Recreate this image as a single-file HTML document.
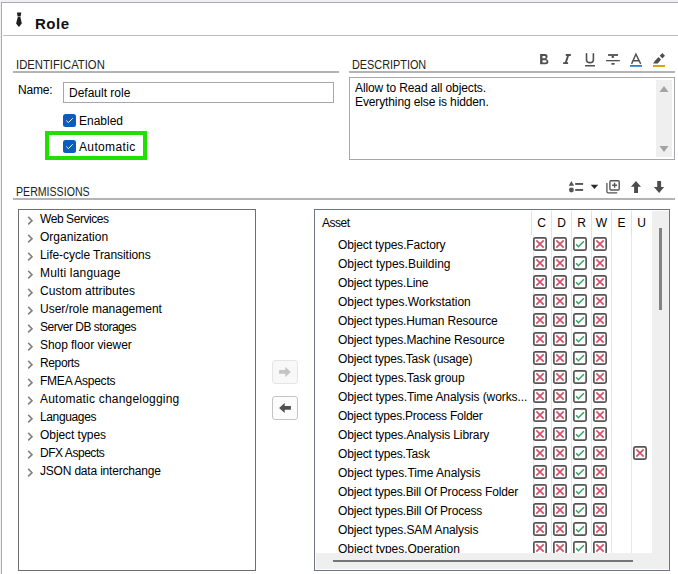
<!DOCTYPE html><html><head><meta charset="utf-8"><style>
*{box-sizing:border-box;margin:0;padding:0}
html,body{width:678px;height:574px;overflow:hidden;background:#f0f0f0;font-family:"Liberation Sans",sans-serif;font-size:12px;color:#000}
.a{position:absolute;white-space:nowrap}
#panel{position:absolute;left:1px;top:2px;width:700px;height:600px;background:#fff;border:1px solid #a9abb2}
.hline{position:absolute;height:2px;background:#b4b4b4}
.cap{position:absolute;white-space:nowrap;letter-spacing:-0.55px;line-height:14px;color:#222}
.t{position:absolute;white-space:nowrap;line-height:14px}
.chk{position:absolute;width:13px;height:13px;border-radius:2.5px;background:#0b5cc0}
.tree{position:absolute;left:18px;top:209px;width:238px;height:362px;border:1px solid #6e6e6e;background:#fff}
.trow{position:absolute;left:0;height:18px;line-height:18px;white-space:nowrap;letter-spacing:-0.05px}
.chev{position:absolute;left:7.5px;top:6px}
.grid{position:absolute;left:314px;top:209px;width:356px;height:362px;border:1px solid #6f7480;background:#fff;overflow:hidden}
.grow{position:absolute;left:0;height:19px;line-height:19px;white-space:nowrap}
.grow .tx{position:absolute;left:23px;top:0;letter-spacing:-0.12px}
.cb{position:absolute;top:1px}
.vsep{position:absolute;width:1px}
.btn{position:absolute;width:26px;height:24px;border-radius:3px}
</style></head><body>
<div id="panel"></div>
<svg class="a" style="left:10px;top:8px" width="20" height="22" viewBox="10 8 20 22"><path d="M16.9 12.6H21.3L20.6 16.5H17.6Z" fill="#1f1f1f"/><path d="M17.8 16.9H20.4L21.8 23.6L18.95 26.9L16.1 23.6Z" fill="#1f1f1f"/></svg>
<div class="a" style="left:35px;top:15px;font-weight:bold;font-size:15px;line-height:18px;letter-spacing:0.5px;color:#111">Role</div>
<div class="a" style="left:3px;top:35px;width:680px;height:1px;background:#bdbdbd"></div>
<div class="cap" style="left:15.5px;top:58px;letter-spacing:0;transform:scaleX(0.94);transform-origin:0 0">IDENTIFICATION</div>
<div class="hline" style="left:13px;top:71px;width:326px"></div>
<div class="t" style="left:18px;top:83px;letter-spacing:-0.2px">Name:</div>
<div class="a" style="left:63px;top:82px;width:271px;height:21px;border:1px solid #a6a6ae;background:#fff"></div>
<div class="t" style="left:69px;top:86px">Default role</div>
<div class="chk" style="left:63px;top:114px"><svg width="13" height="13" viewBox="0 0 13 13" style="position:absolute;left:0;top:0"><path d="M3.3 6.6L5.4 8.6L9.7 4.3" fill="none" stroke="#fff" stroke-width="1"/></svg></div>
<div class="t" style="left:79px;top:114px">Enabled</div>
<div class="a" style="left:45px;top:131px;width:102px;height:29px;border:4px solid #20e000"></div>
<div class="chk" style="left:63px;top:140px"><svg width="13" height="13" viewBox="0 0 13 13" style="position:absolute;left:0;top:0"><path d="M3.3 6.6L5.4 8.6L9.7 4.3" fill="none" stroke="#fff" stroke-width="1"/></svg></div>
<div class="t" style="left:79px;top:140px;letter-spacing:0.35px">Automatic</div>
<div class="cap" style="left:351.6px;top:58px;letter-spacing:0;transform:scaleX(0.905);transform-origin:0 0">DESCRIPTION</div>
<div class="hline" style="left:349px;top:71px;width:326px"></div>
<svg class="a" style="left:530px;top:48px" width="140" height="22" viewBox="530 48 140 22">
<path fill-rule="evenodd" fill="#505050" d="M540.1 54H545Q547.6 54 547.6 56.6Q547.6 58.4 546.2 59.1Q548.4 59.8 548.4 61.6Q548.4 64.2 545.6 64.2H540.1ZM542.5 55.9H544.8Q545.7 55.9 545.7 57.1Q545.7 58.2 544.8 58.2H542.5ZM542.5 60.3H545.2Q546.6 60.3 546.6 61.5Q546.6 62.4 545.2 62.4H542.5Z"/>
<path d="M565.8 55H570.8M563.1 63.1H568.1M568.3 55L565.6 63.1" stroke="#505050" stroke-width="1.9" fill="none"/>
<path d="M586.5 53.8V59.5Q586.5 62.6 589.95 62.6Q593.4 62.6 593.4 59.5V53.8" stroke="#505050" stroke-width="1.6" fill="none" stroke-linecap="round"/>
<rect x="585" y="65" width="10" height="1.5" fill="#505050"/>
<rect x="608.1" y="54.1" width="9.9" height="1.8" fill="#505050"/><path d="M611.5 55.9H614L613.6 58H611.9Z" fill="#505050"/><rect x="606.1" y="60" width="13.7" height="1.3" fill="#505050"/><rect x="611.4" y="63" width="3.2" height="1.7" fill="#505050"/>
<path d="M631.6 63.9L635.9 54.2L640.7 63.9M633.3 60.7H639" stroke="#505050" stroke-width="1.4" fill="none"/><rect x="630" y="65" width="12" height="1.8" fill="#2f7fc5"/>
<path d="M662.3 53L665 55.7L662.4 58.4L659.7 55.7Z" fill="#505050"/><path d="M658.5 57.1L661 59.5L657.9 63.5L653 63.6L655.2 60.4Z" fill="#505050"/><rect x="653" y="65" width="12" height="2" fill="#dba214"/>
</svg>
<div class="a" style="left:349px;top:77px;width:326px;height:83px;border:1px solid #a6a6ae;background:#fff"></div>
<div class="a" style="left:656px;top:80px;width:16px;height:77px;background:#efefef"></div>
<svg class="a" style="left:659px;top:85px" width="10" height="8" viewBox="0 0 10 8"><path d="M0.5 7L5 1L9.5 7Z" fill="#a3a3a3"/></svg>
<svg class="a" style="left:659px;top:145px" width="10" height="8" viewBox="0 0 10 8"><path d="M0.5 1L5 7L9.5 1Z" fill="#a3a3a3"/></svg>
<div class="a" style="left:355px;top:80.6px;line-height:14.8px;letter-spacing:-0.12px">Allow to Read all objects.<br>Everything else is hidden.</div>
<div class="cap" style="left:15.5px;top:185px;letter-spacing:0;transform:scaleX(0.883);transform-origin:0 0">PERMISSIONS</div>
<div class="hline" style="left:13px;top:198px;width:662px"></div>
<svg class="a" style="left:560px;top:176px" width="118" height="22" viewBox="560 176 118 22">
<path d="M571.4 181.1L574.1 185.7H568.7Z" fill="#555"/><circle cx="571.4" cy="190" r="2.45" fill="#555"/>
<rect x="575.2" y="183" width="7.9" height="1.9" fill="#555"/><rect x="575.2" y="189" width="7.9" height="1.9" fill="#555"/>
<path d="M590.7 184.8H598.2L594.45 188.9Z" fill="#2a2a2a"/>
<path d="M606.9 183V191.6Q606.9 192.9 608.2 192.9H617.2" stroke="#555" stroke-width="1.3" fill="none"/>
<rect x="609.9" y="180.7" width="9.3" height="9.3" rx="1" stroke="#555" stroke-width="1.4" fill="#fff"/>
<path d="M614.6 182.8V187.8M612.1 185.3H617.1" stroke="#555" stroke-width="1.4"/>
<path d="M635.95 181.1L641 186.7H638V192.9H634.1V186.7H630.9Z" fill="#4d4d4d"/>
<path d="M657.2 181.1H661.1V187H664.1L659.15 192.9L653.9 187H657.2Z" fill="#4d4d4d"/>
</svg>
<div class="tree">
<div class="trow" style="top:0px;letter-spacing:-0.432px"><svg class="chev" width="7" height="10" viewBox="0 0 7 10"><path d="M1.2 0.9L5 4.65L1.2 8.4" stroke="#808080" stroke-width="1.55" fill="none"/></svg><span style="position:absolute;left:21px">Web Services</span></div>
<div class="trow" style="top:18px;letter-spacing:0.005px"><svg class="chev" width="7" height="10" viewBox="0 0 7 10"><path d="M1.2 0.9L5 4.65L1.2 8.4" stroke="#808080" stroke-width="1.55" fill="none"/></svg><span style="position:absolute;left:21px">Organization</span></div>
<div class="trow" style="top:36px;letter-spacing:-0.064px"><svg class="chev" width="7" height="10" viewBox="0 0 7 10"><path d="M1.2 0.9L5 4.65L1.2 8.4" stroke="#808080" stroke-width="1.55" fill="none"/></svg><span style="position:absolute;left:21px">Life-cycle Transitions</span></div>
<div class="trow" style="top:54px;letter-spacing:0.188px"><svg class="chev" width="7" height="10" viewBox="0 0 7 10"><path d="M1.2 0.9L5 4.65L1.2 8.4" stroke="#808080" stroke-width="1.55" fill="none"/></svg><span style="position:absolute;left:21px">Multi language</span></div>
<div class="trow" style="top:72px;letter-spacing:0.056px"><svg class="chev" width="7" height="10" viewBox="0 0 7 10"><path d="M1.2 0.9L5 4.65L1.2 8.4" stroke="#808080" stroke-width="1.55" fill="none"/></svg><span style="position:absolute;left:21px">Custom attributes</span></div>
<div class="trow" style="top:90px;letter-spacing:-0.008px"><svg class="chev" width="7" height="10" viewBox="0 0 7 10"><path d="M1.2 0.9L5 4.65L1.2 8.4" stroke="#808080" stroke-width="1.55" fill="none"/></svg><span style="position:absolute;left:21px">User/role management</span></div>
<div class="trow" style="top:108px;letter-spacing:-0.485px"><svg class="chev" width="7" height="10" viewBox="0 0 7 10"><path d="M1.2 0.9L5 4.65L1.2 8.4" stroke="#808080" stroke-width="1.55" fill="none"/></svg><span style="position:absolute;left:21px">Server DB storages</span></div>
<div class="trow" style="top:126px;letter-spacing:-0.056px"><svg class="chev" width="7" height="10" viewBox="0 0 7 10"><path d="M1.2 0.9L5 4.65L1.2 8.4" stroke="#808080" stroke-width="1.55" fill="none"/></svg><span style="position:absolute;left:21px">Shop floor viewer</span></div>
<div class="trow" style="top:144px;letter-spacing:-0.367px"><svg class="chev" width="7" height="10" viewBox="0 0 7 10"><path d="M1.2 0.9L5 4.65L1.2 8.4" stroke="#808080" stroke-width="1.55" fill="none"/></svg><span style="position:absolute;left:21px">Reports</span></div>
<div class="trow" style="top:162px;letter-spacing:-0.232px"><svg class="chev" width="7" height="10" viewBox="0 0 7 10"><path d="M1.2 0.9L5 4.65L1.2 8.4" stroke="#808080" stroke-width="1.55" fill="none"/></svg><span style="position:absolute;left:21px">FMEA Aspects</span></div>
<div class="trow" style="top:180px;letter-spacing:0.205px"><svg class="chev" width="7" height="10" viewBox="0 0 7 10"><path d="M1.2 0.9L5 4.65L1.2 8.4" stroke="#808080" stroke-width="1.55" fill="none"/></svg><span style="position:absolute;left:21px">Automatic changelogging</span></div>
<div class="trow" style="top:198px;letter-spacing:-0.362px"><svg class="chev" width="7" height="10" viewBox="0 0 7 10"><path d="M1.2 0.9L5 4.65L1.2 8.4" stroke="#808080" stroke-width="1.55" fill="none"/></svg><span style="position:absolute;left:21px">Languages</span></div>
<div class="trow" style="top:216px;letter-spacing:-0.059px"><svg class="chev" width="7" height="10" viewBox="0 0 7 10"><path d="M1.2 0.9L5 4.65L1.2 8.4" stroke="#808080" stroke-width="1.55" fill="none"/></svg><span style="position:absolute;left:21px">Object types</span></div>
<div class="trow" style="top:234px;letter-spacing:-0.460px"><svg class="chev" width="7" height="10" viewBox="0 0 7 10"><path d="M1.2 0.9L5 4.65L1.2 8.4" stroke="#808080" stroke-width="1.55" fill="none"/></svg><span style="position:absolute;left:21px">DFX Aspects</span></div>
<div class="trow" style="top:252px;letter-spacing:-0.190px"><svg class="chev" width="7" height="10" viewBox="0 0 7 10"><path d="M1.2 0.9L5 4.65L1.2 8.4" stroke="#808080" stroke-width="1.55" fill="none"/></svg><span style="position:absolute;left:21px">JSON data interchange</span></div>
</div>
<div class="btn" style="left:272px;top:360px;border:1px solid #e6e6e6;background:#f8f8f8"><svg style="position:absolute;left:5px;top:5px" width="14" height="12" viewBox="0 0 14 12"><path d="M1.1 3.9H7.3V0.9L12.9 5.9L7.3 10.9V7.8H1.1Z" fill="#c4c4c4"/></svg></div>
<div class="btn" style="left:272px;top:396px;border:1px solid #c4c4c4;background:#fcfcfc"><svg style="position:absolute;left:5px;top:5px" width="14" height="12" viewBox="0 0 14 12"><path d="M12.9 3.9H6.7V0.9L1.1 5.9L6.7 10.9V7.8H12.9Z" fill="#505050"/></svg></div>
<div class="grid">
<div class="a" style="left:7px;top:4px;line-height:19px;letter-spacing:-0.5px">Asset</div>
<div class="vsep" style="left:216px;top:1px;height:24px;background:#e2e2e2"></div>
<div class="vsep" style="left:218px;top:25px;height:318px;background:#dde9fb"></div>
<div class="a" style="left:217px;width:19px;text-align:center;top:4px;line-height:19px">C</div>
<div class="vsep" style="left:236px;top:1px;height:24px;background:#e2e2e2"></div>
<div class="vsep" style="left:236px;top:25px;height:318px;background:#dde9fb"></div>
<div class="a" style="left:237px;width:19px;text-align:center;top:4px;line-height:19px">D</div>
<div class="vsep" style="left:256px;top:1px;height:24px;background:#e2e2e2"></div>
<div class="vsep" style="left:256px;top:25px;height:318px;background:#dde9fb"></div>
<div class="a" style="left:257px;width:19px;text-align:center;top:4px;line-height:19px">R</div>
<div class="vsep" style="left:276px;top:1px;height:24px;background:#e2e2e2"></div>
<div class="vsep" style="left:276px;top:25px;height:318px;background:#dde9fb"></div>
<div class="a" style="left:277px;width:19px;text-align:center;top:4px;line-height:19px">W</div>
<div class="vsep" style="left:296px;top:1px;height:24px;background:#e2e2e2"></div>
<div class="vsep" style="left:296px;top:25px;height:318px;background:#dde9fb"></div>
<div class="a" style="left:297px;width:19px;text-align:center;top:4px;line-height:19px">E</div>
<div class="vsep" style="left:316px;top:1px;height:24px;background:#e2e2e2"></div>
<div class="vsep" style="left:316px;top:25px;height:318px;background:#dde9fb"></div>
<div class="a" style="left:317px;width:19px;text-align:center;top:4px;line-height:19px">U</div>
<div class="grow" style="top:26px;width:336px"><span class="tx" style="letter-spacing:-0.131px">Object types.Factory</span><svg class="cb" style="left:218px" width="14" height="14" viewBox="0 0 14 14"><rect x="0.85" y="0.85" width="12.3" height="12.3" rx="1.6" fill="#fff" stroke="#555" stroke-width="1.7"/><path d="M3.3 3.3L10.7 10.7M10.7 3.3L3.3 10.7" stroke="#d64f6a" stroke-width="1.7"/></svg><svg class="cb" style="left:238px" width="14" height="14" viewBox="0 0 14 14"><rect x="0.85" y="0.85" width="12.3" height="12.3" rx="1.6" fill="#fff" stroke="#555" stroke-width="1.7"/><path d="M3.3 3.3L10.7 10.7M10.7 3.3L3.3 10.7" stroke="#d64f6a" stroke-width="1.7"/></svg><svg class="cb" style="left:258px" width="14" height="14" viewBox="0 0 14 14"><rect x="0.85" y="0.85" width="12.3" height="12.3" rx="1.6" fill="#fff" stroke="#555" stroke-width="1.7"/><path d="M3.1 7.2L5.4 9.7L10.9 4.2" fill="none" stroke="#2ca55c" stroke-width="1.45"/></svg><svg class="cb" style="left:278px" width="14" height="14" viewBox="0 0 14 14"><rect x="0.85" y="0.85" width="12.3" height="12.3" rx="1.6" fill="#fff" stroke="#555" stroke-width="1.7"/><path d="M3.3 3.3L10.7 10.7M10.7 3.3L3.3 10.7" stroke="#d64f6a" stroke-width="1.7"/></svg></div>
<div class="grow" style="top:45px;width:336px"><span class="tx" style="letter-spacing:-0.010px">Object types.Building</span><svg class="cb" style="left:218px" width="14" height="14" viewBox="0 0 14 14"><rect x="0.85" y="0.85" width="12.3" height="12.3" rx="1.6" fill="#fff" stroke="#555" stroke-width="1.7"/><path d="M3.3 3.3L10.7 10.7M10.7 3.3L3.3 10.7" stroke="#d64f6a" stroke-width="1.7"/></svg><svg class="cb" style="left:238px" width="14" height="14" viewBox="0 0 14 14"><rect x="0.85" y="0.85" width="12.3" height="12.3" rx="1.6" fill="#fff" stroke="#555" stroke-width="1.7"/><path d="M3.3 3.3L10.7 10.7M10.7 3.3L3.3 10.7" stroke="#d64f6a" stroke-width="1.7"/></svg><svg class="cb" style="left:258px" width="14" height="14" viewBox="0 0 14 14"><rect x="0.85" y="0.85" width="12.3" height="12.3" rx="1.6" fill="#fff" stroke="#555" stroke-width="1.7"/><path d="M3.1 7.2L5.4 9.7L10.9 4.2" fill="none" stroke="#2ca55c" stroke-width="1.45"/></svg><svg class="cb" style="left:278px" width="14" height="14" viewBox="0 0 14 14"><rect x="0.85" y="0.85" width="12.3" height="12.3" rx="1.6" fill="#fff" stroke="#555" stroke-width="1.7"/><path d="M3.3 3.3L10.7 10.7M10.7 3.3L3.3 10.7" stroke="#d64f6a" stroke-width="1.7"/></svg></div>
<div class="grow" style="top:64px;width:336px"><span class="tx" style="letter-spacing:-0.145px">Object types.Line</span><svg class="cb" style="left:218px" width="14" height="14" viewBox="0 0 14 14"><rect x="0.85" y="0.85" width="12.3" height="12.3" rx="1.6" fill="#fff" stroke="#555" stroke-width="1.7"/><path d="M3.3 3.3L10.7 10.7M10.7 3.3L3.3 10.7" stroke="#d64f6a" stroke-width="1.7"/></svg><svg class="cb" style="left:238px" width="14" height="14" viewBox="0 0 14 14"><rect x="0.85" y="0.85" width="12.3" height="12.3" rx="1.6" fill="#fff" stroke="#555" stroke-width="1.7"/><path d="M3.3 3.3L10.7 10.7M10.7 3.3L3.3 10.7" stroke="#d64f6a" stroke-width="1.7"/></svg><svg class="cb" style="left:258px" width="14" height="14" viewBox="0 0 14 14"><rect x="0.85" y="0.85" width="12.3" height="12.3" rx="1.6" fill="#fff" stroke="#555" stroke-width="1.7"/><path d="M3.1 7.2L5.4 9.7L10.9 4.2" fill="none" stroke="#2ca55c" stroke-width="1.45"/></svg><svg class="cb" style="left:278px" width="14" height="14" viewBox="0 0 14 14"><rect x="0.85" y="0.85" width="12.3" height="12.3" rx="1.6" fill="#fff" stroke="#555" stroke-width="1.7"/><path d="M3.3 3.3L10.7 10.7M10.7 3.3L3.3 10.7" stroke="#d64f6a" stroke-width="1.7"/></svg></div>
<div class="grow" style="top:83px;width:336px"><span class="tx" style="letter-spacing:-0.020px">Object types.Workstation</span><svg class="cb" style="left:218px" width="14" height="14" viewBox="0 0 14 14"><rect x="0.85" y="0.85" width="12.3" height="12.3" rx="1.6" fill="#fff" stroke="#555" stroke-width="1.7"/><path d="M3.3 3.3L10.7 10.7M10.7 3.3L3.3 10.7" stroke="#d64f6a" stroke-width="1.7"/></svg><svg class="cb" style="left:238px" width="14" height="14" viewBox="0 0 14 14"><rect x="0.85" y="0.85" width="12.3" height="12.3" rx="1.6" fill="#fff" stroke="#555" stroke-width="1.7"/><path d="M3.3 3.3L10.7 10.7M10.7 3.3L3.3 10.7" stroke="#d64f6a" stroke-width="1.7"/></svg><svg class="cb" style="left:258px" width="14" height="14" viewBox="0 0 14 14"><rect x="0.85" y="0.85" width="12.3" height="12.3" rx="1.6" fill="#fff" stroke="#555" stroke-width="1.7"/><path d="M3.1 7.2L5.4 9.7L10.9 4.2" fill="none" stroke="#2ca55c" stroke-width="1.45"/></svg><svg class="cb" style="left:278px" width="14" height="14" viewBox="0 0 14 14"><rect x="0.85" y="0.85" width="12.3" height="12.3" rx="1.6" fill="#fff" stroke="#555" stroke-width="1.7"/><path d="M3.3 3.3L10.7 10.7M10.7 3.3L3.3 10.7" stroke="#d64f6a" stroke-width="1.7"/></svg></div>
<div class="grow" style="top:102px;width:336px"><span class="tx" style="letter-spacing:-0.139px">Object types.Human Resource</span><svg class="cb" style="left:218px" width="14" height="14" viewBox="0 0 14 14"><rect x="0.85" y="0.85" width="12.3" height="12.3" rx="1.6" fill="#fff" stroke="#555" stroke-width="1.7"/><path d="M3.3 3.3L10.7 10.7M10.7 3.3L3.3 10.7" stroke="#d64f6a" stroke-width="1.7"/></svg><svg class="cb" style="left:238px" width="14" height="14" viewBox="0 0 14 14"><rect x="0.85" y="0.85" width="12.3" height="12.3" rx="1.6" fill="#fff" stroke="#555" stroke-width="1.7"/><path d="M3.3 3.3L10.7 10.7M10.7 3.3L3.3 10.7" stroke="#d64f6a" stroke-width="1.7"/></svg><svg class="cb" style="left:258px" width="14" height="14" viewBox="0 0 14 14"><rect x="0.85" y="0.85" width="12.3" height="12.3" rx="1.6" fill="#fff" stroke="#555" stroke-width="1.7"/><path d="M3.1 7.2L5.4 9.7L10.9 4.2" fill="none" stroke="#2ca55c" stroke-width="1.45"/></svg><svg class="cb" style="left:278px" width="14" height="14" viewBox="0 0 14 14"><rect x="0.85" y="0.85" width="12.3" height="12.3" rx="1.6" fill="#fff" stroke="#555" stroke-width="1.7"/><path d="M3.3 3.3L10.7 10.7M10.7 3.3L3.3 10.7" stroke="#d64f6a" stroke-width="1.7"/></svg></div>
<div class="grow" style="top:121px;width:336px"><span class="tx" style="letter-spacing:-0.124px">Object types.Machine Resource</span><svg class="cb" style="left:218px" width="14" height="14" viewBox="0 0 14 14"><rect x="0.85" y="0.85" width="12.3" height="12.3" rx="1.6" fill="#fff" stroke="#555" stroke-width="1.7"/><path d="M3.3 3.3L10.7 10.7M10.7 3.3L3.3 10.7" stroke="#d64f6a" stroke-width="1.7"/></svg><svg class="cb" style="left:238px" width="14" height="14" viewBox="0 0 14 14"><rect x="0.85" y="0.85" width="12.3" height="12.3" rx="1.6" fill="#fff" stroke="#555" stroke-width="1.7"/><path d="M3.3 3.3L10.7 10.7M10.7 3.3L3.3 10.7" stroke="#d64f6a" stroke-width="1.7"/></svg><svg class="cb" style="left:258px" width="14" height="14" viewBox="0 0 14 14"><rect x="0.85" y="0.85" width="12.3" height="12.3" rx="1.6" fill="#fff" stroke="#555" stroke-width="1.7"/><path d="M3.1 7.2L5.4 9.7L10.9 4.2" fill="none" stroke="#2ca55c" stroke-width="1.45"/></svg><svg class="cb" style="left:278px" width="14" height="14" viewBox="0 0 14 14"><rect x="0.85" y="0.85" width="12.3" height="12.3" rx="1.6" fill="#fff" stroke="#555" stroke-width="1.7"/><path d="M3.3 3.3L10.7 10.7M10.7 3.3L3.3 10.7" stroke="#d64f6a" stroke-width="1.7"/></svg></div>
<div class="grow" style="top:140px;width:336px"><span class="tx" style="letter-spacing:-0.174px">Object types.Task (usage)</span><svg class="cb" style="left:218px" width="14" height="14" viewBox="0 0 14 14"><rect x="0.85" y="0.85" width="12.3" height="12.3" rx="1.6" fill="#fff" stroke="#555" stroke-width="1.7"/><path d="M3.3 3.3L10.7 10.7M10.7 3.3L3.3 10.7" stroke="#d64f6a" stroke-width="1.7"/></svg><svg class="cb" style="left:238px" width="14" height="14" viewBox="0 0 14 14"><rect x="0.85" y="0.85" width="12.3" height="12.3" rx="1.6" fill="#fff" stroke="#555" stroke-width="1.7"/><path d="M3.3 3.3L10.7 10.7M10.7 3.3L3.3 10.7" stroke="#d64f6a" stroke-width="1.7"/></svg><svg class="cb" style="left:258px" width="14" height="14" viewBox="0 0 14 14"><rect x="0.85" y="0.85" width="12.3" height="12.3" rx="1.6" fill="#fff" stroke="#555" stroke-width="1.7"/><path d="M3.1 7.2L5.4 9.7L10.9 4.2" fill="none" stroke="#2ca55c" stroke-width="1.45"/></svg><svg class="cb" style="left:278px" width="14" height="14" viewBox="0 0 14 14"><rect x="0.85" y="0.85" width="12.3" height="12.3" rx="1.6" fill="#fff" stroke="#555" stroke-width="1.7"/><path d="M3.3 3.3L10.7 10.7M10.7 3.3L3.3 10.7" stroke="#d64f6a" stroke-width="1.7"/></svg></div>
<div class="grow" style="top:159px;width:336px"><span class="tx" style="letter-spacing:-0.097px">Object types.Task group</span><svg class="cb" style="left:218px" width="14" height="14" viewBox="0 0 14 14"><rect x="0.85" y="0.85" width="12.3" height="12.3" rx="1.6" fill="#fff" stroke="#555" stroke-width="1.7"/><path d="M3.3 3.3L10.7 10.7M10.7 3.3L3.3 10.7" stroke="#d64f6a" stroke-width="1.7"/></svg><svg class="cb" style="left:238px" width="14" height="14" viewBox="0 0 14 14"><rect x="0.85" y="0.85" width="12.3" height="12.3" rx="1.6" fill="#fff" stroke="#555" stroke-width="1.7"/><path d="M3.3 3.3L10.7 10.7M10.7 3.3L3.3 10.7" stroke="#d64f6a" stroke-width="1.7"/></svg><svg class="cb" style="left:258px" width="14" height="14" viewBox="0 0 14 14"><rect x="0.85" y="0.85" width="12.3" height="12.3" rx="1.6" fill="#fff" stroke="#555" stroke-width="1.7"/><path d="M3.1 7.2L5.4 9.7L10.9 4.2" fill="none" stroke="#2ca55c" stroke-width="1.45"/></svg><svg class="cb" style="left:278px" width="14" height="14" viewBox="0 0 14 14"><rect x="0.85" y="0.85" width="12.3" height="12.3" rx="1.6" fill="#fff" stroke="#555" stroke-width="1.7"/><path d="M3.3 3.3L10.7 10.7M10.7 3.3L3.3 10.7" stroke="#d64f6a" stroke-width="1.7"/></svg></div>
<div class="grow" style="top:178px;width:336px"><span class="tx" style="letter-spacing:-0.083px">Object types.Time Analysis (works...</span><svg class="cb" style="left:218px" width="14" height="14" viewBox="0 0 14 14"><rect x="0.85" y="0.85" width="12.3" height="12.3" rx="1.6" fill="#fff" stroke="#555" stroke-width="1.7"/><path d="M3.3 3.3L10.7 10.7M10.7 3.3L3.3 10.7" stroke="#d64f6a" stroke-width="1.7"/></svg><svg class="cb" style="left:238px" width="14" height="14" viewBox="0 0 14 14"><rect x="0.85" y="0.85" width="12.3" height="12.3" rx="1.6" fill="#fff" stroke="#555" stroke-width="1.7"/><path d="M3.3 3.3L10.7 10.7M10.7 3.3L3.3 10.7" stroke="#d64f6a" stroke-width="1.7"/></svg><svg class="cb" style="left:258px" width="14" height="14" viewBox="0 0 14 14"><rect x="0.85" y="0.85" width="12.3" height="12.3" rx="1.6" fill="#fff" stroke="#555" stroke-width="1.7"/><path d="M3.1 7.2L5.4 9.7L10.9 4.2" fill="none" stroke="#2ca55c" stroke-width="1.45"/></svg><svg class="cb" style="left:278px" width="14" height="14" viewBox="0 0 14 14"><rect x="0.85" y="0.85" width="12.3" height="12.3" rx="1.6" fill="#fff" stroke="#555" stroke-width="1.7"/><path d="M3.3 3.3L10.7 10.7M10.7 3.3L3.3 10.7" stroke="#d64f6a" stroke-width="1.7"/></svg></div>
<div class="grow" style="top:197px;width:336px"><span class="tx" style="letter-spacing:-0.228px">Object types.Process Folder</span><svg class="cb" style="left:218px" width="14" height="14" viewBox="0 0 14 14"><rect x="0.85" y="0.85" width="12.3" height="12.3" rx="1.6" fill="#fff" stroke="#555" stroke-width="1.7"/><path d="M3.3 3.3L10.7 10.7M10.7 3.3L3.3 10.7" stroke="#d64f6a" stroke-width="1.7"/></svg><svg class="cb" style="left:238px" width="14" height="14" viewBox="0 0 14 14"><rect x="0.85" y="0.85" width="12.3" height="12.3" rx="1.6" fill="#fff" stroke="#555" stroke-width="1.7"/><path d="M3.3 3.3L10.7 10.7M10.7 3.3L3.3 10.7" stroke="#d64f6a" stroke-width="1.7"/></svg><svg class="cb" style="left:258px" width="14" height="14" viewBox="0 0 14 14"><rect x="0.85" y="0.85" width="12.3" height="12.3" rx="1.6" fill="#fff" stroke="#555" stroke-width="1.7"/><path d="M3.1 7.2L5.4 9.7L10.9 4.2" fill="none" stroke="#2ca55c" stroke-width="1.45"/></svg><svg class="cb" style="left:278px" width="14" height="14" viewBox="0 0 14 14"><rect x="0.85" y="0.85" width="12.3" height="12.3" rx="1.6" fill="#fff" stroke="#555" stroke-width="1.7"/><path d="M3.3 3.3L10.7 10.7M10.7 3.3L3.3 10.7" stroke="#d64f6a" stroke-width="1.7"/></svg></div>
<div class="grow" style="top:216px;width:336px"><span class="tx" style="letter-spacing:-0.124px">Object types.Analysis Library</span><svg class="cb" style="left:218px" width="14" height="14" viewBox="0 0 14 14"><rect x="0.85" y="0.85" width="12.3" height="12.3" rx="1.6" fill="#fff" stroke="#555" stroke-width="1.7"/><path d="M3.3 3.3L10.7 10.7M10.7 3.3L3.3 10.7" stroke="#d64f6a" stroke-width="1.7"/></svg><svg class="cb" style="left:238px" width="14" height="14" viewBox="0 0 14 14"><rect x="0.85" y="0.85" width="12.3" height="12.3" rx="1.6" fill="#fff" stroke="#555" stroke-width="1.7"/><path d="M3.3 3.3L10.7 10.7M10.7 3.3L3.3 10.7" stroke="#d64f6a" stroke-width="1.7"/></svg><svg class="cb" style="left:258px" width="14" height="14" viewBox="0 0 14 14"><rect x="0.85" y="0.85" width="12.3" height="12.3" rx="1.6" fill="#fff" stroke="#555" stroke-width="1.7"/><path d="M3.1 7.2L5.4 9.7L10.9 4.2" fill="none" stroke="#2ca55c" stroke-width="1.45"/></svg><svg class="cb" style="left:278px" width="14" height="14" viewBox="0 0 14 14"><rect x="0.85" y="0.85" width="12.3" height="12.3" rx="1.6" fill="#fff" stroke="#555" stroke-width="1.7"/><path d="M3.3 3.3L10.7 10.7M10.7 3.3L3.3 10.7" stroke="#d64f6a" stroke-width="1.7"/></svg></div>
<div class="grow" style="top:235px;width:336px"><span class="tx" style="letter-spacing:-0.176px">Object types.Task</span><svg class="cb" style="left:218px" width="14" height="14" viewBox="0 0 14 14"><rect x="0.85" y="0.85" width="12.3" height="12.3" rx="1.6" fill="#fff" stroke="#555" stroke-width="1.7"/><path d="M3.3 3.3L10.7 10.7M10.7 3.3L3.3 10.7" stroke="#d64f6a" stroke-width="1.7"/></svg><svg class="cb" style="left:238px" width="14" height="14" viewBox="0 0 14 14"><rect x="0.85" y="0.85" width="12.3" height="12.3" rx="1.6" fill="#fff" stroke="#555" stroke-width="1.7"/><path d="M3.3 3.3L10.7 10.7M10.7 3.3L3.3 10.7" stroke="#d64f6a" stroke-width="1.7"/></svg><svg class="cb" style="left:258px" width="14" height="14" viewBox="0 0 14 14"><rect x="0.85" y="0.85" width="12.3" height="12.3" rx="1.6" fill="#fff" stroke="#555" stroke-width="1.7"/><path d="M3.1 7.2L5.4 9.7L10.9 4.2" fill="none" stroke="#2ca55c" stroke-width="1.45"/></svg><svg class="cb" style="left:278px" width="14" height="14" viewBox="0 0 14 14"><rect x="0.85" y="0.85" width="12.3" height="12.3" rx="1.6" fill="#fff" stroke="#555" stroke-width="1.7"/><path d="M3.3 3.3L10.7 10.7M10.7 3.3L3.3 10.7" stroke="#d64f6a" stroke-width="1.7"/></svg><svg class="cb" style="left:318px" width="14" height="14" viewBox="0 0 14 14"><rect x="0.85" y="0.85" width="12.3" height="12.3" rx="1.6" fill="#fff" stroke="#555" stroke-width="1.7"/><path d="M3.3 3.3L10.7 10.7M10.7 3.3L3.3 10.7" stroke="#d64f6a" stroke-width="1.7"/></svg></div>
<div class="grow" style="top:254px;width:336px"><span class="tx" style="letter-spacing:-0.048px">Object types.Time Analysis</span><svg class="cb" style="left:218px" width="14" height="14" viewBox="0 0 14 14"><rect x="0.85" y="0.85" width="12.3" height="12.3" rx="1.6" fill="#fff" stroke="#555" stroke-width="1.7"/><path d="M3.3 3.3L10.7 10.7M10.7 3.3L3.3 10.7" stroke="#d64f6a" stroke-width="1.7"/></svg><svg class="cb" style="left:238px" width="14" height="14" viewBox="0 0 14 14"><rect x="0.85" y="0.85" width="12.3" height="12.3" rx="1.6" fill="#fff" stroke="#555" stroke-width="1.7"/><path d="M3.3 3.3L10.7 10.7M10.7 3.3L3.3 10.7" stroke="#d64f6a" stroke-width="1.7"/></svg><svg class="cb" style="left:258px" width="14" height="14" viewBox="0 0 14 14"><rect x="0.85" y="0.85" width="12.3" height="12.3" rx="1.6" fill="#fff" stroke="#555" stroke-width="1.7"/><path d="M3.1 7.2L5.4 9.7L10.9 4.2" fill="none" stroke="#2ca55c" stroke-width="1.45"/></svg><svg class="cb" style="left:278px" width="14" height="14" viewBox="0 0 14 14"><rect x="0.85" y="0.85" width="12.3" height="12.3" rx="1.6" fill="#fff" stroke="#555" stroke-width="1.7"/><path d="M3.3 3.3L10.7 10.7M10.7 3.3L3.3 10.7" stroke="#d64f6a" stroke-width="1.7"/></svg></div>
<div class="grow" style="top:273px;width:336px"><span class="tx" style="letter-spacing:-0.173px">Object types.Bill Of Process Folder</span><svg class="cb" style="left:218px" width="14" height="14" viewBox="0 0 14 14"><rect x="0.85" y="0.85" width="12.3" height="12.3" rx="1.6" fill="#fff" stroke="#555" stroke-width="1.7"/><path d="M3.3 3.3L10.7 10.7M10.7 3.3L3.3 10.7" stroke="#d64f6a" stroke-width="1.7"/></svg><svg class="cb" style="left:238px" width="14" height="14" viewBox="0 0 14 14"><rect x="0.85" y="0.85" width="12.3" height="12.3" rx="1.6" fill="#fff" stroke="#555" stroke-width="1.7"/><path d="M3.3 3.3L10.7 10.7M10.7 3.3L3.3 10.7" stroke="#d64f6a" stroke-width="1.7"/></svg><svg class="cb" style="left:258px" width="14" height="14" viewBox="0 0 14 14"><rect x="0.85" y="0.85" width="12.3" height="12.3" rx="1.6" fill="#fff" stroke="#555" stroke-width="1.7"/><path d="M3.1 7.2L5.4 9.7L10.9 4.2" fill="none" stroke="#2ca55c" stroke-width="1.45"/></svg><svg class="cb" style="left:278px" width="14" height="14" viewBox="0 0 14 14"><rect x="0.85" y="0.85" width="12.3" height="12.3" rx="1.6" fill="#fff" stroke="#555" stroke-width="1.7"/><path d="M3.3 3.3L10.7 10.7M10.7 3.3L3.3 10.7" stroke="#d64f6a" stroke-width="1.7"/></svg></div>
<div class="grow" style="top:292px;width:336px"><span class="tx" style="letter-spacing:-0.161px">Object types.Bill Of Process</span><svg class="cb" style="left:218px" width="14" height="14" viewBox="0 0 14 14"><rect x="0.85" y="0.85" width="12.3" height="12.3" rx="1.6" fill="#fff" stroke="#555" stroke-width="1.7"/><path d="M3.3 3.3L10.7 10.7M10.7 3.3L3.3 10.7" stroke="#d64f6a" stroke-width="1.7"/></svg><svg class="cb" style="left:238px" width="14" height="14" viewBox="0 0 14 14"><rect x="0.85" y="0.85" width="12.3" height="12.3" rx="1.6" fill="#fff" stroke="#555" stroke-width="1.7"/><path d="M3.3 3.3L10.7 10.7M10.7 3.3L3.3 10.7" stroke="#d64f6a" stroke-width="1.7"/></svg><svg class="cb" style="left:258px" width="14" height="14" viewBox="0 0 14 14"><rect x="0.85" y="0.85" width="12.3" height="12.3" rx="1.6" fill="#fff" stroke="#555" stroke-width="1.7"/><path d="M3.1 7.2L5.4 9.7L10.9 4.2" fill="none" stroke="#2ca55c" stroke-width="1.45"/></svg><svg class="cb" style="left:278px" width="14" height="14" viewBox="0 0 14 14"><rect x="0.85" y="0.85" width="12.3" height="12.3" rx="1.6" fill="#fff" stroke="#555" stroke-width="1.7"/><path d="M3.3 3.3L10.7 10.7M10.7 3.3L3.3 10.7" stroke="#d64f6a" stroke-width="1.7"/></svg></div>
<div class="grow" style="top:311px;width:336px"><span class="tx" style="letter-spacing:-0.124px">Object types.SAM Analysis</span><svg class="cb" style="left:218px" width="14" height="14" viewBox="0 0 14 14"><rect x="0.85" y="0.85" width="12.3" height="12.3" rx="1.6" fill="#fff" stroke="#555" stroke-width="1.7"/><path d="M3.3 3.3L10.7 10.7M10.7 3.3L3.3 10.7" stroke="#d64f6a" stroke-width="1.7"/></svg><svg class="cb" style="left:238px" width="14" height="14" viewBox="0 0 14 14"><rect x="0.85" y="0.85" width="12.3" height="12.3" rx="1.6" fill="#fff" stroke="#555" stroke-width="1.7"/><path d="M3.3 3.3L10.7 10.7M10.7 3.3L3.3 10.7" stroke="#d64f6a" stroke-width="1.7"/></svg><svg class="cb" style="left:258px" width="14" height="14" viewBox="0 0 14 14"><rect x="0.85" y="0.85" width="12.3" height="12.3" rx="1.6" fill="#fff" stroke="#555" stroke-width="1.7"/><path d="M3.1 7.2L5.4 9.7L10.9 4.2" fill="none" stroke="#2ca55c" stroke-width="1.45"/></svg><svg class="cb" style="left:278px" width="14" height="14" viewBox="0 0 14 14"><rect x="0.85" y="0.85" width="12.3" height="12.3" rx="1.6" fill="#fff" stroke="#555" stroke-width="1.7"/><path d="M3.3 3.3L10.7 10.7M10.7 3.3L3.3 10.7" stroke="#d64f6a" stroke-width="1.7"/></svg></div>
<div class="grow" style="top:330px;width:336px"><span class="tx" style="letter-spacing:-0.044px">Object types.Operation</span><svg class="cb" style="left:218px" width="14" height="14" viewBox="0 0 14 14"><rect x="0.85" y="0.85" width="12.3" height="12.3" rx="1.6" fill="#fff" stroke="#555" stroke-width="1.7"/><path d="M3.3 3.3L10.7 10.7M10.7 3.3L3.3 10.7" stroke="#d64f6a" stroke-width="1.7"/></svg><svg class="cb" style="left:238px" width="14" height="14" viewBox="0 0 14 14"><rect x="0.85" y="0.85" width="12.3" height="12.3" rx="1.6" fill="#fff" stroke="#555" stroke-width="1.7"/><path d="M3.3 3.3L10.7 10.7M10.7 3.3L3.3 10.7" stroke="#d64f6a" stroke-width="1.7"/></svg><svg class="cb" style="left:258px" width="14" height="14" viewBox="0 0 14 14"><rect x="0.85" y="0.85" width="12.3" height="12.3" rx="1.6" fill="#fff" stroke="#555" stroke-width="1.7"/><path d="M3.1 7.2L5.4 9.7L10.9 4.2" fill="none" stroke="#2ca55c" stroke-width="1.45"/></svg><svg class="cb" style="left:278px" width="14" height="14" viewBox="0 0 14 14"><rect x="0.85" y="0.85" width="12.3" height="12.3" rx="1.6" fill="#fff" stroke="#555" stroke-width="1.7"/><path d="M3.3 3.3L10.7 10.7M10.7 3.3L3.3 10.7" stroke="#d64f6a" stroke-width="1.7"/></svg></div>
<div class="a" style="left:337px;top:1px;width:17px;height:342px;background:#efefef"></div>
<div class="a" style="left:344px;top:18px;width:3px;height:82px;background:#828282"></div>
<div class="a" style="left:1px;top:343px;width:353px;height:16px;background:#efefef"></div>
<div class="a" style="left:18px;top:350px;width:300px;height:2px;background:#767676"></div>
</div>
</body></html>
